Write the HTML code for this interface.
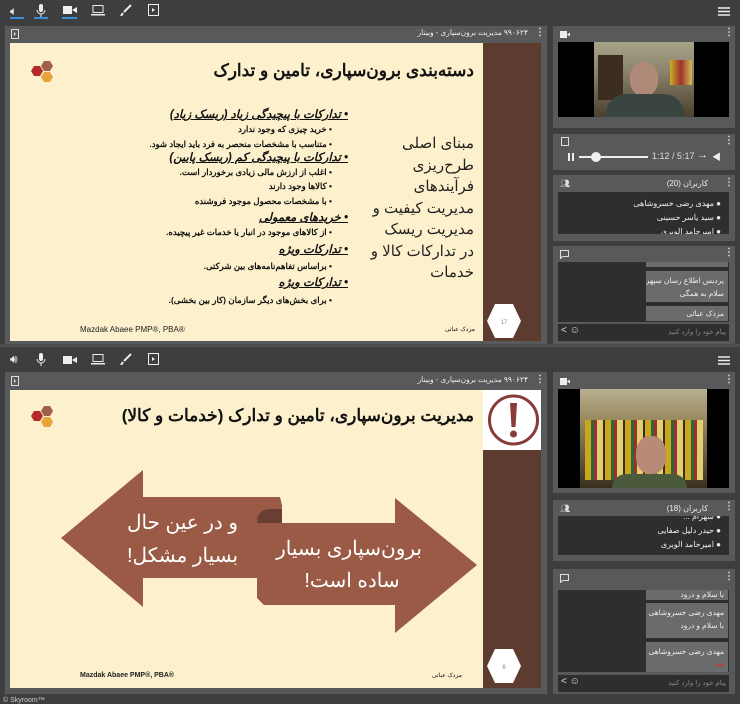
<!DOCTYPE html>
<html><head><meta charset="utf-8"><style>
*{margin:0;padding:0;box-sizing:border-box}
body{width:740px;height:704px;background:#3c3e40;position:relative;overflow:hidden;font-family:"Liberation Sans","Noto Sans CJK SC",sans-serif;color:#fff}
.a{position:absolute}
.p{position:absolute;background:#58595b}
.in{position:absolute;background:#2d2e30}
.slide{position:absolute;background:#fdf0cd}
.brown{position:absolute;background:#5e3b2f}
.t{position:absolute;direction:rtl;white-space:nowrap;color:#111}
.ic{position:absolute;color:#eee;font-size:12px}
.ul{position:absolute;height:2px;background:#3a8ed8}
.msg{position:absolute;background:#6a6b6d;color:#eee;font-size:7.5px;direction:rtl;padding:3px 4px;white-space:nowrap;overflow:hidden}
.dots{position:absolute;color:#ddd;font-size:10px;font-weight:bold}
</style></head><body>

<!-- top toolbar -->
<div class="ic" style="left:10px;top:4px">🔈︎</div>
<div class="ul" style="left:10px;top:17px;width:14px"></div>
<svg class="a" style="left:35px;top:4px" width="12" height="14"><rect x="4" y="0" width="4" height="8" rx="2" fill="#eee"/><path d="M2 6a4 4 0 0 0 8 0M6 10v3" stroke="#eee" fill="none"/></svg>
<div class="ul" style="left:34px;top:17px;width:14px"></div>
<svg class="a" style="left:63px;top:5px" width="14" height="10"><rect x="0" y="1" width="9" height="8" fill="#eee"/><path d="M9 5l5-3v6z" fill="#eee"/></svg>
<div class="ul" style="left:62px;top:17px;width:15px"></div>
<svg class="a" style="left:91px;top:5px" width="14" height="11"><rect x="2" y="0.5" width="10" height="7" fill="none" stroke="#eee"/><rect x="0" y="9" width="14" height="1.5" fill="#eee"/></svg>
<svg class="a" style="left:120px;top:4px" width="12" height="12"><path d="M11 1L4 8M3 9l-2 3" stroke="#eee" stroke-width="2"/></svg>
<svg class="a" style="left:148px;top:4px" width="11" height="12"><rect x="0.5" y="0.5" width="10" height="11" fill="none" stroke="#eee"/><path d="M4 4l3 2-3 2z" fill="#eee"/></svg>
<svg class="a" style="left:718px;top:7px" width="12" height="9"><path d="M0 1h12M0 4.5h12M0 8h12" stroke="#eee" stroke-width="1.5"/></svg>

<!-- top left panel -->
<div class="p" style="left:5px;top:26px;width:542px;height:320px"></div>
<svg class="a" style="left:11px;top:29px" width="8" height="10"><rect x="0.5" y="0.5" width="7" height="9" fill="none" stroke="#ddd"/><path d="M3 3l2 2-2 2z" fill="#ddd"/></svg>
<div class="t" style="right:212px;top:28px;font-size:7.5px;color:#eee">۹۹۰۶۲۴ مدیریت برون‌سپاری - وبینار</div>
<div class="dots" style="left:535px;top:27px">⋮</div>
<div class="slide" style="left:10px;top:43px;width:473px;height:298px"></div>
<div class="brown" style="left:483px;top:43px;width:58px;height:298px"></div>
<svg class="a" style="left:28px;top:60px" width="30" height="26"><polygon points="6,6 12,6 15,11 12,16 6,16 3,11" fill="#b52a2a"/><polygon points="16,1 22,1 25,6 22,11 16,11 13,6" fill="#a0604a"/><polygon points="16,12 22,12 25,17 22,22 16,22 13,17" fill="#e8a33a"/></svg>
<div class="t" style="right:266px;top:61px;font-size:17px;font-weight:bold">دسته‌بندی برون‌سپاری، تامین و تدارک</div>
<div class="t" style="right:392px;top:108px;font-size:11.5px;line-height:14.3px;font-weight:bold">
<div style="font-style:italic;text-decoration:underline">• تدارکات با پیچیدگی زیاد (ریسک زیاد)</div>
<div style="font-size:8.5px;margin-right:16px">• خرید چیزی که وجود ندارد</div>
<div style="font-size:8.5px;margin-right:16px">• متناسب با مشخصات منحصر به فرد باید ایجاد شود.</div>
<div style="font-style:italic;text-decoration:underline">• تدارکات با پیچیدگی کم (ریسک پایین)</div>
<div style="font-size:8.5px;margin-right:16px">• اغلب از ارزش مالی زیادی برخوردار است.</div>
<div style="font-size:8.5px;margin-right:16px">• کالاها وجود دارند</div>
<div style="font-size:8.5px;margin-right:16px">• با مشخصات محصول موجود فروشنده</div>
<div style="font-style:italic;text-decoration:underline;margin-top:3px">• خریدهای معمولی</div>
<div style="font-size:8.5px;margin-right:16px">• از کالاهای موجود در انبار یا خدمات غیر پیچیده.</div>
<div style="font-style:italic;text-decoration:underline;margin-top:3px">• تدارکات ویژه</div>
<div style="font-size:8.5px;margin-right:16px;margin-top:2px">• براساس تفاهم‌نامه‌های بین شرکتی.</div>
<div style="font-style:italic;text-decoration:underline;margin-top:3px">• تدارکات ویژه</div>
<div style="font-size:8.5px;margin-right:16px;margin-top:2px">• برای بخش‌های دیگر سازمان (کار بین بخشی).</div>
</div>
<div class="t" style="right:266px;top:133px;font-size:15px;line-height:21.5px;color:#222">مبنای اصلی<br>طرح‌ریزی<br>فرآیندهای<br>مدیریت کیفیت و<br>مدیریت ریسک<br>در تدارکات کالا و<br>خدمات</div>
<div class="a" style="left:80px;top:325px;font-size:8px;color:#222">Mazdak Abaee PMP®, PBA®</div>
<div class="t" style="right:265px;top:326px;font-size:6px">مزدک عباثی</div>
<svg class="a" style="left:486px;top:303px" width="36" height="36"><polygon points="9,1 27,1 35,18 27,35 9,35 1,18" fill="#fff"/><text x="18" y="21" font-size="6" fill="#888" text-anchor="middle">17</text></svg>

<!-- top right panels -->
<div class="p" style="left:553px;top:26px;width:182px;height:102px"></div>
<svg class="a" style="left:560px;top:31px" width="10" height="7"><rect width="7" height="7" fill="#eee"/><path d="M7 3.5l3-2v4z" fill="#eee"/></svg>
<div class="dots" style="left:724px;top:27px">⋮</div>
<div class="a" style="left:558px;top:42px;width:171px;height:75px;background:#000"></div>
<div class="a" style="left:594px;top:42px;width:100px;height:75px;background:linear-gradient(180deg,#a8a48a 0%,#8a826a 40%,#4a4030 100%)"></div>
<div class="a" style="left:598px;top:55px;width:25px;height:45px;background:#3b2d20"></div>
<div class="a" style="left:670px;top:60px;width:22px;height:25px;background:linear-gradient(90deg,#c8b020,#a03030,#d0c050)"></div>
<div class="a" style="left:630px;top:62px;width:28px;height:34px;border-radius:45%;background:#b08a78"></div>
<div class="a" style="left:606px;top:94px;width:78px;height:23px;border-radius:20px 20px 0 0;background:#3a4440"></div>

<div class="p" style="left:553px;top:134px;width:182px;height:36px"></div>
<svg class="a" style="left:561px;top:137px" width="8" height="9"><rect x="0.5" y="0.5" width="7" height="8" fill="none" stroke="#ddd"/></svg>
<div class="dots" style="left:724px;top:135px">⋮</div>
<div class="a" style="left:568px;top:153px;width:2px;height:8px;background:#eee"></div>
<div class="a" style="left:572px;top:153px;width:2px;height:8px;background:#eee"></div>
<div class="a" style="left:579px;top:156px;width:69px;height:2px;background:#eee"></div>
<div class="a" style="left:591px;top:152px;width:10px;height:10px;border-radius:50%;background:#eee"></div>
<div class="a" style="left:652px;top:151px;font-size:9px;color:#ddd">1:12 / 5:17</div>
<div class="a" style="left:697px;top:149px;font-size:11px;color:#eee">→</div>
<div class="a" style="left:712px;top:150px;font-size:9px;color:#eee">◀︎</div>

<div class="p" style="left:553px;top:175px;width:182px;height:66px"></div>
<div class="a" style="left:560px;top:179px;font-size:8px;color:#ddd">👥︎</div>
<div class="t" style="right:32px;top:179px;font-size:8px;color:#eee">کاربران (20)</div>
<div class="dots" style="left:724px;top:177px">⋮</div>
<div class="in" style="left:558px;top:192px;width:171px;height:42px;overflow:hidden">
<div class="t" style="right:8px;top:5px;font-size:8px;color:#eee;line-height:14px">● مهدی رضی خسروشاهی<br>● سید یاسر حسینی<br>● امیرحامد الویری</div></div>

<div class="p" style="left:553px;top:246px;width:182px;height:98px"></div>
<svg class="a" style="left:560px;top:250px" width="9" height="9"><path d="M0.5 0.5h8v6h-6l-2 2z" fill="none" stroke="#ddd"/></svg>
<div class="dots" style="left:724px;top:247px">⋮</div>
<div class="in" style="left:558px;top:262px;width:171px;height:60px"></div>
<div class="msg" style="left:646px;top:262px;width:82px;height:5px;padding:0"></div>
<div class="msg" style="left:646px;top:271px;width:82px;height:31px;line-height:13px">پردیس اطلاع رسان سپهر<br>سلام به همگی</div>
<div class="msg" style="left:646px;top:306px;width:82px;height:15px">مزدک عبائی</div>
<div class="in" style="left:558px;top:324px;width:171px;height:17px"></div>
<div class="a" style="left:561px;top:325px;font-size:10px;color:#ddd">&lt; ☺</div>
<div class="t" style="right:14px;top:328px;font-size:7px;color:#888">پیام خود را وارد کنید</div>

<!-- bottom toolbar -->
<div class="a" style="left:0;top:344px;width:740px;height:3px;background:#4e4f51"></div>
<div class="ic" style="left:10px;top:352px">🔊︎</div>
<div class="ul" style="left:10px;top:374px;width:14px"></div>
<svg class="a" style="left:35px;top:353px" width="12" height="14"><rect x="4" y="0" width="4" height="8" rx="2" fill="#eee"/><path d="M2 6a4 4 0 0 0 8 0M6 10v3" stroke="#eee" fill="none"/></svg>
<div class="ul" style="left:34px;top:374px;width:14px"></div>
<svg class="a" style="left:63px;top:355px" width="14" height="10"><rect x="0" y="1" width="9" height="8" fill="#eee"/><path d="M9 5l5-3v6z" fill="#eee"/></svg>
<div class="ul" style="left:62px;top:374px;width:15px"></div>
<svg class="a" style="left:91px;top:354px" width="14" height="11"><rect x="2" y="0.5" width="10" height="7" fill="none" stroke="#eee"/><rect x="0" y="9" width="14" height="1.5" fill="#eee"/></svg>
<svg class="a" style="left:120px;top:353px" width="12" height="12"><path d="M11 1L4 8M3 9l-2 3" stroke="#eee" stroke-width="2"/></svg>
<svg class="a" style="left:148px;top:353px" width="11" height="12"><rect x="0.5" y="0.5" width="10" height="11" fill="none" stroke="#eee"/><path d="M4 4l3 2-3 2z" fill="#eee"/></svg>
<svg class="a" style="left:718px;top:356px" width="12" height="9"><path d="M0 1h12M0 4.5h12M0 8h12" stroke="#eee" stroke-width="1.5"/></svg>

<!-- bottom left panel -->
<div class="p" style="left:5px;top:372px;width:542px;height:322px"></div>
<svg class="a" style="left:11px;top:376px" width="8" height="10"><rect x="0.5" y="0.5" width="7" height="9" fill="none" stroke="#ddd"/><path d="M3 3l2 2-2 2z" fill="#ddd"/></svg>
<div class="t" style="right:212px;top:375px;font-size:7.5px;color:#eee">۹۹۰۶۲۴ مدیریت برون‌سپاری - وبینار</div>
<div class="dots" style="left:535px;top:374px">⋮</div>
<div class="slide" style="left:10px;top:390px;width:473px;height:298px"></div>
<div class="brown" style="left:483px;top:450px;width:58px;height:238px"></div>
<div class="a" style="left:483px;top:390px;width:58px;height:60px;background:#fff"></div>
<svg class="a" style="left:487px;top:393px" width="53" height="54"><circle cx="26.5" cy="27" r="24" fill="none" stroke="#8a3a38" stroke-width="3"/><path d="M23 10h7l-1.5 24h-4z" fill="#8a3a38"/><circle cx="26.5" cy="41" r="3.5" fill="#8a3a38"/></svg>
<svg class="a" style="left:28px;top:405px" width="30" height="26"><polygon points="6,6 12,6 15,11 12,16 6,16 3,11" fill="#b52a2a"/><polygon points="16,1 22,1 25,6 22,11 16,11 13,6" fill="#a0604a"/><polygon points="16,12 22,12 25,17 22,22 16,22 13,17" fill="#e8a33a"/></svg>
<div class="t" style="right:266px;top:406px;font-size:17px;font-weight:bold">مدیریت برون‌سپاری، تامین و تدارک (خدمات و کالا)</div>
<svg class="a" style="left:0;top:0" width="740" height="704">
<polygon points="61,538 143,470 143,497 280,497 282,505 282,578 143,578 143,607" fill="#9a5a46"/>
<path d="M257 523 q0 -14 14 -14 h11 v14z" fill="#6a3e32"/>
<polygon points="257,523 395,523 395,498 477,565 395,633 395,605 264,605 257,598" fill="#9a5a46"/>
</svg>
<div class="t" style="left:120px;width:125px;top:507px;font-size:20px;line-height:33px;color:#fff;text-align:center;direction:rtl">و در عین حال<br>بسیار مشکل!</div>
<div class="t" style="left:282px;width:140px;top:533px;font-size:20px;line-height:32px;color:#fff;text-align:center;direction:rtl">برون‌سپاری بسیار<br>ساده است!</div>
<div class="a" style="left:80px;top:672px;font-size:7px;font-weight:bold;color:#222">Mazdak Abaee PMP®, PBA®</div>
<div class="t" style="right:278px;top:672px;font-size:6px">مزدک عباثی</div>
<svg class="a" style="left:486px;top:648px" width="36" height="36"><polygon points="9,1 27,1 35,18 27,35 9,35 1,18" fill="#fff"/><text x="18" y="21" font-size="6" fill="#888" text-anchor="middle">6</text></svg>

<!-- bottom right panels -->
<div class="p" style="left:553px;top:372px;width:182px;height:121px"></div>
<svg class="a" style="left:560px;top:378px" width="10" height="7"><rect width="7" height="7" fill="#eee"/><path d="M7 3.5l3-2v4z" fill="#eee"/></svg>
<div class="dots" style="left:724px;top:374px">⋮</div>
<div class="a" style="left:558px;top:389px;width:171px;height:99px;background:#000"></div>
<div class="a" style="left:580px;top:389px;width:127px;height:99px;background:linear-gradient(180deg,#b8b090 0%,#9a8a60 30%,#3a3020 100%)"></div>
<div class="a" style="left:585px;top:420px;width:118px;height:60px;background:repeating-linear-gradient(90deg,#c9a820 0 6px,#2a6a3a 6px 9px,#a03030 9px 12px,#e0d070 12px 18px,#3a2a20 18px 20px)"></div>
<div class="a" style="left:636px;top:436px;width:30px;height:38px;border-radius:45%;background:#b88a78"></div>
<div class="a" style="left:612px;top:474px;width:75px;height:14px;border-radius:18px 18px 0 0;background:#4a5a3a"></div>

<div class="p" style="left:553px;top:500px;width:182px;height:61px"></div>
<div class="a" style="left:560px;top:504px;font-size:8px;color:#ddd">👥︎</div>
<div class="t" style="right:32px;top:504px;font-size:8px;color:#eee">کاربران (18)</div>
<div class="dots" style="left:724px;top:501px">⋮</div>
<div class="in" style="left:558px;top:516px;width:171px;height:39px;overflow:hidden">
<div class="t" style="right:8px;top:-6px;font-size:8px;color:#eee;line-height:14px">● شهرام ...<br>● حیدر دلیل صفایی<br>● امیرحامد الویری</div></div>

<div class="p" style="left:553px;top:569px;width:182px;height:125px"></div>
<svg class="a" style="left:560px;top:574px" width="9" height="9"><path d="M0.5 0.5h8v6h-6l-2 2z" fill="none" stroke="#ddd"/></svg>
<div class="dots" style="left:724px;top:571px">⋮</div>
<div class="in" style="left:558px;top:590px;width:171px;height:82px"></div>
<div class="msg" style="left:646px;top:590px;width:82px;height:10px;padding:0 4px;line-height:9px">با سلام و درود</div>
<div class="msg" style="left:646px;top:603px;width:82px;height:35px;line-height:13px">مهدی رضی خسروشاهی<br>با سلام و درود</div>
<div class="msg" style="left:646px;top:642px;width:82px;height:30px;line-height:13px">مهدی رضی خسروشاهی<br><span style="color:#c33">●●</span></div>
<div class="in" style="left:558px;top:675px;width:171px;height:17px"></div>
<div class="a" style="left:561px;top:676px;font-size:10px;color:#ddd">&lt; ☺</div>
<div class="t" style="right:14px;top:679px;font-size:7px;color:#888">پیام خود را وارد کنید</div>

<div class="a" style="left:3px;top:697px;font-size:7px;color:#ccc">© Skyroom™</div>
</body></html>
